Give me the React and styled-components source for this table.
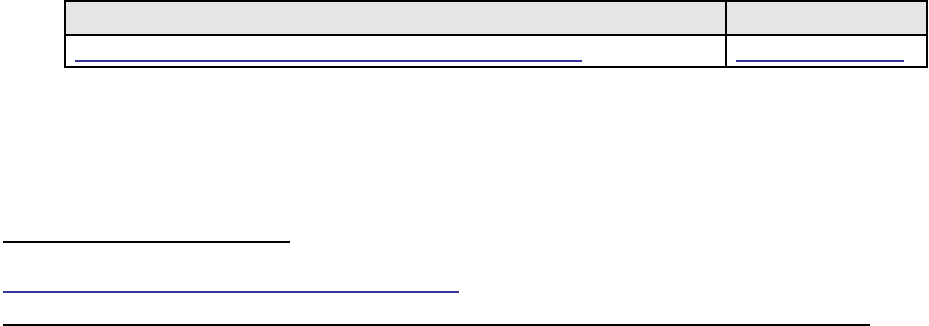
import React from "react";
import styled, { createGlobalStyle } from "styled-components";

const GlobalStyle = createGlobalStyle`
  html, body {
    margin: 0;
    padding: 0;
    background: #fff;
    font-family: Arial, "Liberation Sans", sans-serif;
  }
`;

const Page = styled.div`
  display: flex;
  flex-direction: column;
  align-items: flex-start;
  padding: 0 0 0 3px;
`;

const Table = styled.div`
  margin-left: 61px;
  display: grid;
  grid-template-columns: 659px 199px;
  gap: 2px;
  border: 2px solid #000;
  background: #000;
`;

const HeadCell = styled.div`
  height: 32px;
  background: #e5e5e5;
`;

const Cell = styled.div`
  height: 30px;
  background: #fff;
  display: flex;
  align-items: flex-end;
  padding: 0 0 4px 9px;
  box-sizing: border-box;
`;

const LinkLine = styled.a`
  display: block;
  width: ${(p) => p.$w}px;
  border-bottom: 2px solid #333399;
  color: #333399;
`;

const Rule = styled.div`
  width: ${(p) => p.$w}px;
  height: 2px;
  margin-top: ${(p) => p.$top}px;
  background: ${(p) => p.$color || "#000"};
`;

export default function App() {
  return (
    <>
      <GlobalStyle />
      <Page>
        <Table>
          <HeadCell />
          <HeadCell />
          <Cell>
            <LinkLine href="#" $w={507} />
          </Cell>
          <Cell>
            <LinkLine href="#" $w={168} />
          </Cell>
        </Table>
        <Rule $w={287} $top={173} />
        <Rule $w={456} $top={48} $color="#333399" />
        <Rule $w={867} $top={31} />
      </Page>
    </>
  );
}
